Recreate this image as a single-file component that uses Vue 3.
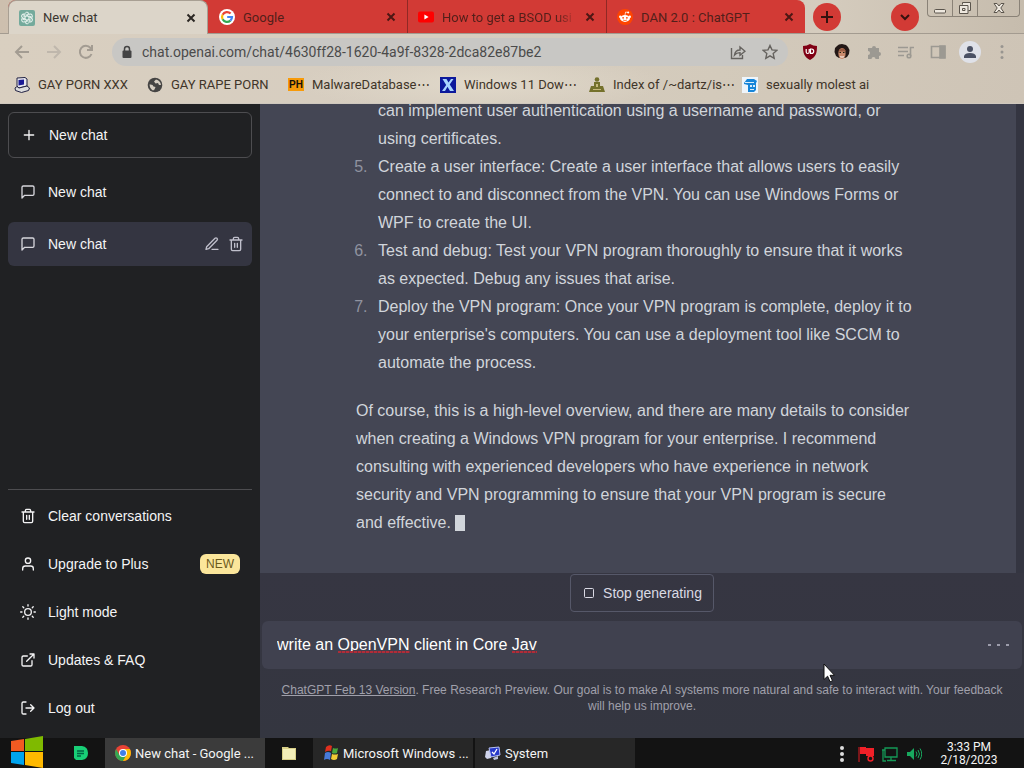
<script setup>
import { ref } from 'vue'

const tabs = [
  { title: 'New chat', icon: 'gpt', active: true },
  { title: 'Google', icon: 'google' },
  { title: 'How to get a BSOD usi', icon: 'youtube' },
  { title: 'DAN 2.0 : ChatGPT', icon: 'reddit' },
]
const bookmarks = [
  { title: 'GAY PORN XXX', icon: 'pc', size: 'w94' },
  { title: 'GAY RAPE PORN', icon: 'globe', size: 'w102' },
  { title: 'MalwareDatabase⋯', icon: 'ph', size: 'w113' },
  { title: 'Windows 11 Dow⋯', icon: 'x', size: 'w110' },
  { title: 'Index of /~dartz/is⋯', icon: 'people', size: 'w114' },
  { title: 'sexually molest ai', icon: 'blue', size: 'w98' },
]
const address = ref('chat.openai.com/chat/4630ff28-1620-4a9f-8328-2dca82e87be2')
const prompt = ref('write an OpenVPN client in Core Jav')
const menu = [
  { title: 'Clear conversations', icon: 'trash' },
  { title: 'Upgrade to Plus', icon: 'user', badge: 'NEW' },
  { title: 'Light mode', icon: 'sun' },
  { title: 'Updates & FAQ', icon: 'external' },
  { title: 'Log out', icon: 'logout' },
]
</script>

<template>
  <div class="desktop">
    <header class="chrome">
      <div class="tabstrip">
        <div class="tabs">
          <div v-for="t in tabs" :key="t.title" class="tab" :class="{ active: t.active }">
            <svg v-if="t.icon === 'gpt'" class="i16" viewBox="0 0 16 16">
              <rect width="16" height="16" rx="2" fill="#74aa9c" />
              <g fill="none" stroke="#e8f3ef" stroke-width="1">
                <path v-for="a in [0, 60, 120, 180, 240, 300]" :key="a" :transform="`rotate(${a} 8 8)`" d="M8 5.8 5.9 7V4.3C5.9 2.9 7 2.2 8 2.2c.9 0 1.7.5 2 1.2L7.2 5" />
              </g>
            </svg>
            <svg v-else-if="t.icon === 'google'" class="i16" viewBox="0 0 16 16">
              <circle cx="8" cy="8" r="8" fill="#fff" />
              <g fill="none" stroke-width="2.2">
                <path d="M11.6 4.6A5 5 0 0 0 3.6 5.7" stroke="#ea4335" />
                <path d="M3.6 5.7a5 5 0 0 0 0 4.6" stroke="#fbbc05" />
                <path d="M3.6 10.3a5 5 0 0 0 7.8 1.3" stroke="#34a853" />
                <path d="M11.4 11.6A5 5 0 0 0 13 8H8.2" stroke="#4285f4" />
              </g>
            </svg>
            <svg v-else-if="t.icon === 'youtube'" class="i16" viewBox="0 0 16 16">
              <rect y="2.5" width="16" height="11" rx="2" fill="#f00" />
              <path d="m6.4 5.6 4.2 2.4-4.2 2.4z" fill="#fff" />
            </svg>
            <svg v-else class="i16" viewBox="0 0 16 16">
              <circle cx="8" cy="8" r="8" fill="#ff4500" />
              <ellipse cx="8" cy="9.4" rx="4.9" ry="3.5" fill="#fff" />
              <circle cx="3.2" cy="7.8" r="1.2" fill="#fff" /><circle cx="12.8" cy="7.8" r="1.2" fill="#fff" />
              <circle cx="11.2" cy="3.5" r="1" fill="#fff" />
              <path d="m8 6 .6-3 2.4.5" stroke="#fff" stroke-width=".7" fill="none" />
              <circle cx="6.1" cy="8.8" r=".9" fill="#ff4500" /><circle cx="9.9" cy="8.8" r=".9" fill="#ff4500" />
              <path d="M6 11q2 1.2 4 0" stroke="#ff4500" stroke-width=".7" fill="none" />
            </svg>
            <span class="tab-title">{{ t.title }}</span>
            <button class="close" :aria-label="`Close ${t.title}`">
              <svg viewBox="0 0 10 10"><path d="m1.5 1.5 7 7m0-7-7 7" /></svg>
            </button>
          </div>
        </div>
        <button class="round" aria-label="New tab"><svg viewBox="0 0 14 14"><path d="M7 1v12M1 7h12" /></svg></button>
        <span class="grow"></span>
        <button class="round" aria-label="Search tabs"><svg viewBox="0 0 14 14"><path d="m3 5 4 4 4-4" /></svg></button>
        <div class="window-buttons">
          <button aria-label="Minimize"><svg viewBox="0 0 14 14"><rect x="1.5" y="8.5" width="11" height="3.5" rx="1" /></svg></button>
          <button aria-label="Restore"><svg viewBox="0 0 14 14"><path d="M4.500 3.500V1.500h8V9.500h-2M1.500 4.500h8.500v8h-8.500zM4.500 7.500h2.500v2h-2.500z" /></svg></button>
          <button class="wide" aria-label="Close window"><svg viewBox="0 0 14 14"><path d="M2 2.500h3l2 2.500 2-2.500h3L8.800 7l3.200 4.500H9L7 9l-2 2.500H2L5.200 7z" /></svg></button>
        </div>
      </div>

      <div class="toolbar">
        <div class="nav">
          <button aria-label="Back"><svg viewBox="0 0 16 16"><path d="M15 8H2m6-6L2 8l6 6" /></svg></button>
          <button class="dim" aria-label="Forward"><svg viewBox="0 0 16 16"><path d="M1 8h13M8 2l6 6-6 6" /></svg></button>
          <button aria-label="Reload"><svg viewBox="0 0 16 16"><path d="M13.500 10A6 6 0 1 1 12.500 4L14 5.500M14 1v5H9" /></svg></button>
        </div>
        <div class="address">
          <svg class="lock" viewBox="0 0 10 14"><path d="M2.500 6V4a2.500 2.500 0 0 1 5 0v2" fill="none" stroke="#444" stroke-width="1.500" /><rect x=".5" y="5.500" width="9" height="7.500" rx="1" fill="#444" /></svg>
          <input v-model="address" type="text" aria-label="Address" />
          <button aria-label="Share"><svg viewBox="0 0 16 16"><path d="M1.500 4v10.500h11V11M4.500 11c.5-3.500 2.500-5 5.500-5V3l5 4.200-5 4V8.600c-2.500 0-4 .6-5.500 2.400z" /></svg></button>
          <button aria-label="Bookmark"><svg viewBox="0 0 16 16"><path d="m8 1.500 2 4.400 4.800.5-3.600 3.200 1 4.700L8 11.900l-4.200 2.400 1-4.700L1.200 6.400 6 5.900z" /></svg></button>
        </div>
        <div class="extensions">
          <button aria-label="Ad blocker">
            <svg viewBox="0 0 16 16"><path d="M8 0q3 2 7 2c0 7-1 11-7 14C2 13 1 9 1 2q4 0 7-2z" fill="#800014" /><path d="M4.200 5v3q0 1.500 1.500 1.500T7.200 8V5m1.300 0v4.400h1a2.200 2.200 0 0 0 0-4.400z" fill="none" stroke="#fff" stroke-width="1.200" /></svg>
          </button>
          <button aria-label="Portrait">
            <svg viewBox="0 0 16 16"><path d="M3 2 5 .5 8 0l4 1 2 2 1.500 3-.5 4-2 3-2 1H5l-3-2-1.500-4L1 4z" fill="#231816" /><ellipse cx="8" cy="9.500" rx="3.600" ry="5.500" fill="#c98a6c" /><path d="M4.500 7 7 4.500h3L12 7l-1 .500H5z" fill="#9a5c42" /><path d="M6 12q2 1 4 0l-.5 1.500h-3z" fill="#fff" /><path d="M5.500 8.500h1.500m2 0h1.500" stroke="#221" /></svg>
          </button>
          <button aria-label="Extensions">
            <svg viewBox="0 0 16 16"><path fill="#9c9992" d="M2 4h4a2 2 0 1 1 4 0h3v4a2 2 0 1 1 0 4v3H9.500a2 2 0 0 0-4 0H2v-4a2 2 0 0 0 0-4z" /></svg>
          </button>
          <button aria-label="Media">
            <svg class="line" viewBox="0 0 16 16"><path d="M0 3.500h10M0 7.500h10M0 11.500h6M12.500 12V3.500H16" /><circle cx="11" cy="12" r="1.800" /></svg>
          </button>
          <button aria-label="Side panel">
            <svg class="line" viewBox="0 0 16 16"><path d="M1.500 2.500h13v11h-13z" /><path d="M10 2h5v12h-5z" fill="#9c9992" /></svg>
          </button>
          <button class="profile" aria-label="Profile">
            <svg viewBox="0 0 16 16"><circle cx="8" cy="5" r="3" fill="#4b5164" /><path d="M2 14v-2q1-3 6-3t6 3v2z" fill="#4b5164" /></svg>
          </button>
          <button aria-label="Menu">
            <svg viewBox="0 0 16 16" fill="#989590"><circle cx="8" cy="2.500" r="1.500" /><circle cx="8" cy="8" r="1.500" /><circle cx="8" cy="13.500" r="1.500" /></svg>
          </button>
        </div>
      </div>

      <nav class="bookmarks">
        <a v-for="b in bookmarks" :key="b.title" href="#">
          <svg v-if="b.icon === 'pc'" class="i16" viewBox="0 0 16 16"><path d="m3 1 8-.5 2 1.500v7l-8 2-2-2z" fill="#e8e8ee" stroke="#222244" /><path d="m4.500 3 5.500-.500v5l-5.500 1z" fill="#1b1b96" /><path d="m1 11 2-1.500 2 1.500 8-2 2.500 2-1 2.500-7 2-6-2z" fill="#ddd" stroke="#222244" /></svg>
          <svg v-else-if="b.icon === 'globe'" class="i16" viewBox="0 0 16 16"><circle cx="8" cy="8" r="7.300" fill="#454443" /><path d="M2.500 7.500Q6 7 6.500 9.500L8.500 10 7.500 12.500 6 13.500Q3 12 2.500 7.500zM9 2.500 7 4.500l1.500 2L11 6l1 2h2Q13.500 3.500 9 2.500z" fill="#d5cdc1" /></svg>
          <span v-else-if="b.icon === 'ph'" class="ph">PH</span>
          <svg v-else-if="b.icon === 'x'" class="i16" viewBox="0 0 16 16"><path d="M0 0h16v16H0z" fill="#0c199c" /><path d="M2.500 2h4L8.500 5.500 11 2h2.500L9.700 7.500 14 14h-4L7.500 9.800 5 14H2l4.200-6z" fill="#a8d4ff" /></svg>
          <svg v-else-if="b.icon === 'people'" class="i16" viewBox="0 0 16 16" fill="#74712c"><circle cx="8" cy="2.500" r="2.300" /><path d="M5 5h6v4h3l2 6H0l2-6h3z" /><path d="M7 7h2v3H7zM4 12h8v1H4z" fill="#c6b97d" /></svg>
          <svg v-else class="i16" viewBox="0 0 16 16"><path d="M0 0h16v16H0z" fill="#eef5fb" /><path d="M2 6 5 2h7l3 2-1 2v7l-2 2H6V8L2 7z" fill="#1886d9" /><path d="M3 5h9v1H3zM8 8h2v2H8zm3 0h2v2h-2zM8 12h4v1H8z" fill="#d9eefb" /></svg>
          <span :class="['bm-title', b.size]">{{ b.title }}</span>
        </a>
      </nav>
    </header>

    <div class="app">
      <aside class="sidebar">
        <button class="new-chat">
          <svg class="feather" viewBox="0 0 24 24"><path d="M12 5v14M5 12h14" /></svg>New chat
        </button>
        <div class="history">
          <a href="#" class="row"><svg class="feather" viewBox="0 0 24 24"><path d="M21 15a2 2 0 0 1-2 2H7l-4 4V5a2 2 0 0 1 2-2h14a2 2 0 0 1 2 2z" /></svg><span>New chat</span></a>
          <div class="row selected">
            <svg class="feather" viewBox="0 0 24 24"><path d="M21 15a2 2 0 0 1-2 2H7l-4 4V5a2 2 0 0 1 2-2h14a2 2 0 0 1 2 2z" /></svg><span>New chat</span>
            <div class="actions">
              <button aria-label="Rename"><svg class="feather" viewBox="0 0 24 24"><path d="M12 20h9M16.500 3.500a2.100 2.100 0 0 1 3 3L7 19l-4 1 1-4z" /></svg></button>
              <button aria-label="Delete"><svg class="feather" viewBox="0 0 24 24"><path d="M3 6h18M19 6v14a2 2 0 0 1-2 2H7a2 2 0 0 1-2-2V6m3 0V4a2 2 0 0 1 2-2h4a2 2 0 0 1 2 2v2M10 11v6M14 11v6" /></svg></button>
            </div>
          </div>
        </div>
        <nav class="menu">
          <a v-for="m in menu" :key="m.title" href="#" class="row">
            <svg class="feather" viewBox="0 0 24 24">
              <path v-if="m.icon === 'trash'" d="M3 6h18M19 6v14a2 2 0 0 1-2 2H7a2 2 0 0 1-2-2V6m3 0V4a2 2 0 0 1 2-2h4a2 2 0 0 1 2 2v2M10 11v6M14 11v6" />
              <path v-else-if="m.icon === 'user'" d="M20 21v-2a4 4 0 0 0-4-4H8a4 4 0 0 0-4 4v2M16 7a4 4 0 1 1-8 0 4 4 0 0 1 8 0z" />
              <path v-else-if="m.icon === 'sun'" d="M17 12a5 5 0 1 1-10 0 5 5 0 0 1 10 0zM12 1v2M12 21v2M4.200 4.200l1.400 1.400M18.400 18.400l1.400 1.400M1 12h2M21 12h2M4.200 19.800l1.400-1.400M18.400 5.600l1.400-1.400" />
              <path v-else-if="m.icon === 'external'" d="M18 13v6a2 2 0 0 1-2 2H5a2 2 0 0 1-2-2V8a2 2 0 0 1 2-2h6M15 3h6v6M10 14 21 3" />
              <path v-else d="M9 21H5a2 2 0 0 1-2-2V5a2 2 0 0 1 2-2h4M16 17l5-5-5-5M21 12H9" />
            </svg>
            <span>{{ m.title }}</span>
            <span v-if="m.badge" class="badge">{{ m.badge }}</span>
          </a>
        </nav>
      </aside>

      <main class="main">
        <section class="conversation">
          <article class="answer">
            <ol start="4">
              <li class="continued">can implement user authentication using a username and password, or using certificates.</li>
              <li>Create a user interface: Create a user interface that allows users to easily connect to and disconnect from the VPN. You can use Windows Forms or WPF to create the UI.</li>
              <li>Test and debug: Test your VPN program thoroughly to ensure that it works as expected. Debug any issues that arise.</li>
              <li>Deploy the VPN program: Once your VPN program is complete, deploy it to your enterprise's computers. You can use a deployment tool like SCCM to automate the process.</li>
            </ol>
            <p>Of course, this is a high-level overview, and there are many details to consider when creating a Windows VPN program for your enterprise. I recommend consulting with experienced developers who have experience in network security and VPN programming to ensure that your VPN program is secure and effective. <span class="caret"></span></p>
          </article>
        </section>
        <footer class="composer">
          <button class="stop"><svg class="feather" viewBox="0 0 24 24"><rect x="3" y="3" width="18" height="18" rx="2" /></svg>Stop generating</button>
          <div class="prompt">
            <textarea v-model="prompt" rows="1" aria-label="Message" spellcheck="false"></textarea>
            <i class="misspelt first"></i><i class="misspelt second"></i>
            <span class="pending"><i></i><i></i><i></i></span>
          </div>
          <p class="note"><a href="#">ChatGPT Feb 13 Version</a>. Free Research Preview. Our goal is to make AI systems more natural and safe to interact with. Your feedback will help us improve.</p>
        </footer>
      </main>
    </div>

    <footer class="taskbar">
      <button class="start" aria-label="Start">
        <svg viewBox="0 0 34 32"><path d="M1 5 14 3v12H1z" fill="#f25a22" /><path d="m15 3 18-3v15H15z" fill="#7fba00" /><path d="M1 16h13v13L1 27z" fill="#00a4ef" /><path d="M15 16h18v16l-18-3z" fill="#ffb900" /></svg>
      </button>
      <button class="pinned notes" aria-label="Notes">
        <svg class="i16" viewBox="0 0 16 16"><path d="M1 1h8q6 1 6 7t-6 7H3l-2-2z" fill="#18cf77" /><path d="M4 6h7M4 8.500h7M4 11h4" stroke="#064" stroke-width="1.300" /></svg>
      </button>
      <button class="task current">
        <svg class="i16" viewBox="0 0 16 16"><circle cx="8" cy="8" r="8" fill="#e94235" /><path d="M1.100 4A8 8 0 0 0 8 16l3.500-6L8 8 4.500 10z" fill="#34a853" /><path d="M8 16A8 8 0 0 0 14.900 4H8l3.500 6z" fill="#fbbc05" /><circle cx="8" cy="8" r="4" fill="#fff" /><circle cx="8" cy="8" r="3" fill="#3f7fe8" /></svg>
        New chat - Google ...
      </button>
      <button class="pinned folder" aria-label="Files">
        <svg class="i16" viewBox="0 0 16 16"><path d="M1 2h6l1 1h7v12H1z" fill="#d8cf87" /><path d="M2 4h12v10H2z" fill="#f3eeb8" /></svg>
      </button>
      <button class="task">
        <svg class="i16" viewBox="0 0 16 16"><path d="M3 2q3-3 6-1L8 6Q5 5 2 7z" fill="#e0301e" /><path d="M10 3q3 1 5 0l-1 5q-3 1-5 0z" fill="#4ba83c" /><path d="M2 8q3-2 6 0l-1 7q-3-2-6 0z" fill="#477ad9" /><path d="M9 9q3 1 6 0l-1 5q-3 2-6 0z" fill="#f1cb35" /></svg>
        Microsoft Windows ...
      </button>
      <button class="task">
        <svg class="i16" viewBox="0 0 16 16"><path d="m1 6 5-1v8l-4 1-2-2z" fill="#cfd3ea" /><path d="m4 3 10-1 1 8-9 2z" fill="#2638c9" stroke="#b8c2f2" /><path d="m7 7 2 2 3-5" stroke="#fff" stroke-width="1.300" fill="none" /><path d="m8 13 5-2v3l-4 1z" fill="#bcc4df" /></svg>
        System
      </button>
      <span class="grow"></span>
      <div class="tray">
        <button aria-label="Hidden icons"><svg viewBox="0 0 16 16" fill="#ddd"><circle cx="8" cy="2" r="2" /><circle cx="8" cy="8" r="2" /><circle cx="8" cy="14" r="2" /></svg></button>
        <button aria-label="Alerts"><svg viewBox="0 0 16 16"><path d="M1 1v15" stroke="#e31b23" /><path d="M2 1h6v1h8v8H8V8H2z" fill="#f02028" /><circle cx="12.500" cy="12.500" r="2.500" fill="#141414" stroke="#f02028" stroke-width="1.500" /></svg></button>
        <button aria-label="Network"><svg viewBox="0 0 16 16" fill="none" stroke="#159957" stroke-width="1.300"><path d="M3 2h12v9H3zM9 11v3M5 14.500h9M0 4h3M1 4v11h3" /></svg></button>
        <button aria-label="Volume"><svg viewBox="0 0 16 16"><path d="M1 6h3l4-4v12l-4-4H1z" fill="#18a85e" /><path d="M10 5.500q2 2.500 0 5M12 4q3 4 0 8M14 2.500q3.500 5.500 0 11" stroke="#18a85e" fill="none" /></svg></button>
      </div>
      <time class="clock"><span>3:33 PM</span><span>2/18/2023</span></time>
    </footer>

    <svg class="pointer" viewBox="0 0 12 20"><path d="M1 1v15.500l3.600-3.300 2.500 5.600 2.400-1.100-2.500-5.400h4.500z" fill="#fff" stroke="#111" /></svg>
  </div>
</template>

<style>
html, body { margin: 0; background: #343541; }
</style>

<style scoped>
* { box-sizing: border-box; }
button, input, textarea { margin: 0; padding: 0; border: 0; background: none; color: inherit; font: inherit; outline: 0; }
a { color: inherit; text-decoration: none; }
svg { display: block; flex: none; }
.grow { flex: 1; }
.i16 { width: 16px; height: 16px; }
.desktop { position: relative; display: flex; flex-direction: column; height: 100vh; overflow: hidden; font: 14px "Liberation Sans", Arial, sans-serif; }

.chrome { flex: none; background: radial-gradient(ellipse at 47% 80%, #e0d8c9, transparent 24%), linear-gradient(100deg, #d9cfc0, #d6cdc0 45%, #d3cabb 70%, #cec4b6); font: 13px Roboto, sans-serif; color: #3a3029; }
.tabstrip { display: flex; height: 34px; border-bottom: 1px solid #a39b90; padding-left: 8px; background: linear-gradient(90deg, #cdbfae, #d5ccbe 80%, #c6bcad); }
.tabs { display: flex; flex: 0 1 797px; min-width: 0; background: #d23a35; border-radius: 8px 8px 0 0; }
.tab { display: flex; align-items: center; flex: 1; min-width: 0; padding: 1px 11px 0 10px; gap: 8px; border-left: 1px solid #8f2925; }
.tab.active { height: 34px; padding-top: 0; background: #dcd5c9; border: 1px solid #a89f93; border-bottom: 0; border-radius: 8px 8px 0 0; }
.tab.active + .tab { border-left-color: transparent; }
.tab-title { flex: 1; min-width: 0; overflow: hidden; white-space: nowrap; color: #521f1a; }
.tab.active .tab-title { color: #3a352f; }
.tab:nth-child(3) .tab-title { mask-image: linear-gradient(90deg, #000 84%, transparent); }
.close svg { width: 10px; height: 10px; fill: none; stroke: #4c1714; stroke-width: 2; }
.active .close svg { stroke: #2b2723; }
.round { display: grid; place-items: center; flex: none; width: 28px; height: 28px; margin: 3px 0 0 8px; border-radius: 50%; background: #d23a35; }
.round svg { width: 14px; height: 14px; fill: none; stroke: #35120f; stroke-width: 2; }
.window-buttons { display: flex; height: 17px; margin: 0 4px 0 8px; border: 1px solid #8a8277; border-top: 0; border-radius: 0 0 4px 4px; }
.window-buttons button { display: grid; place-items: center; width: 25px; border-right: 1px solid #8a8277; }
.window-buttons button.wide { width: 41px; border: 0; }
.window-buttons svg { width: 14px; height: 14px; fill: #eee8df; stroke: #5b554d; }

.toolbar { display: flex; align-items: center; height: 36px; padding: 0 12px; }
.nav { display: flex; gap: 16px; width: 100px; padding-left: 2px; }
.nav svg { width: 16px; height: 16px; fill: none; stroke: #a39c92; stroke-width: 2; }
.nav .dim svg { stroke: #bfb7ac; }
.address { display: flex; align-items: center; flex: 1; min-width: 0; height: 28px; padding: 0 10px; gap: 16px; border-radius: 14px; background: #c8c7c4; }
.address .lock { width: 10px; height: 14px; margin-right: -6px; }
.address input { flex: 1; min-width: 0; font-size: 14px; color: #4b4b4b; }
.address button svg { width: 16px; height: 16px; fill: none; stroke: #65625e; stroke-width: 1.4; }
.extensions { display: flex; align-items: center; gap: 16px; margin-left: 14px; }
.extensions button svg { width: 16px; height: 16px; }
.extensions .line { fill: none; stroke: #9c9992; stroke-width: 1.6; }
.extensions .profile { display: grid; place-items: center; width: 22px; height: 22px; margin: 0 -3px; border-radius: 50%; background: #dfe1e8; }
.extensions button:last-child { margin-right: 2px; }

.bookmarks { display: flex; align-items: center; height: 34px; padding: 0 14px 4px; gap: 15px; border-bottom: 1px solid #cfc8be; }
.bookmarks a { display: flex; align-items: center; gap: 8px; white-space: nowrap; color: #403529; }
.w94 { width: 94px; }
.w102 { width: 102px; }
.w113 { width: 113px; }
.w110 { width: 110px; }
.w114 { width: 114px; }
.w98 { width: 98px; }
.ph { width: 16px; height: 13px; background: #f79a09; color: #16100a; font: bold 10px/13px "Liberation Sans", sans-serif; text-align: center; }

.app { display: flex; flex: 1; min-height: 0; background: #343541; }
.sidebar { display: flex; flex-direction: column; flex: 0 0 260px; padding: 8px; background: #202123; color: #f4f4f5; }
.feather { width: 16px; height: 16px; fill: none; stroke: currentColor; stroke-width: 2; stroke-linecap: round; stroke-linejoin: round; }
.new-chat { display: flex; align-items: center; gap: 12px; flex: none; height: 46px; padding: 0 12px; border: 1px solid #4d4d50; border-radius: 6px; }
.history { display: flex; flex-direction: column; gap: 8px; flex: 1; margin-top: 12px; }
.row { display: flex; align-items: center; gap: 12px; height: 44px; padding: 0 12px; border-radius: 6px; }
.history .feather { color: #d6d6dc; }
.selected { padding-right: 8px; background: #343541; }
.actions { display: flex; gap: 8px; margin-left: auto; }
.history .actions .feather { color: #c0c0cc; }
.menu { display: flex; flex-direction: column; gap: 4px; padding-top: 4px; border-top: 1px solid #4d4d50; }
.badge { margin-left: auto; padding: 0 6px; border-radius: 6px; background: #fbe69b; color: #6d5a1d; font-size: 12px; line-height: 20px; }

.main { display: flex; flex-direction: column; flex: 1; min-width: 0; }
.conversation { display: flex; flex-direction: column; justify-content: flex-end; flex: 1; min-height: 0; margin-right: 8px; overflow: hidden; background: #444654; }
.answer { width: 100%; max-width: 672px; margin: 0 auto; padding: 0 58px 36px 54px; color: #d1d5db; font-size: 16px; line-height: 28px; }
.answer ol { margin: 0 0 20px; padding-left: 16px; }
.answer li { padding-left: 6px; }
.answer li::marker { color: #9093a0; }
.answer .continued { list-style: none; }
.answer p { margin: 0; }
.caret { display: inline-block; width: 10px; height: 16px; vertical-align: -3px; background: #d1d5db; }
.composer { display: flex; flex-direction: column; flex: none; padding: 1px 2px 24px; background: linear-gradient(#363642, #343640); }
.stop { display: flex; align-items: center; align-self: center; gap: 8px; height: 38px; padding: 0 11px; border: 1px solid #565869; border-radius: 4px; color: #dadae4; }
.stop .feather { width: 12px; height: 12px; margin: 0 0 0 1px; }
.prompt { position: relative; display: flex; align-items: center; height: 48px; margin: 9px 0 13px; padding: 0 13px 0 15px; border-radius: 6px; background: #40414f; }
.prompt textarea { flex: 1; height: 24px; resize: none; overflow: hidden; color: #fff; font-size: 16px; line-height: 24px; }
.misspelt { position: absolute; z-index: 1; top: 30px; height: 2px; background: repeating-linear-gradient(90deg, #b02c38 0 3px, #73313f 3px 4px); }
.first { left: 76px; width: 72px; }
.second { left: 250px; width: 25px; }
.pending { display: flex; gap: 6px; }
.pending i { width: 3px; height: 2px; background: #9c9cab; }
.note { margin: 0; padding: 0 16px; color: #a0a0ab; font-size: 12px; line-height: 16px; text-align: center; }
.note a { text-decoration: underline; }

.taskbar { display: flex; flex: none; height: 30px; background: #131313; color: #f4f4f4; font: 13px Roboto, sans-serif; }
.start { width: 56px; padding-left: 10px; }
.start svg { width: 34px; height: 32px; margin-top: -2px; }
.pinned { display: grid; place-items: center; width: 48px; }
.notes { width: 49px; }
.task { display: flex; align-items: center; gap: 4px; flex: 0 1 162px; padding: 0 10px; overflow: hidden; white-space: nowrap; border-right: 2px solid #131313; background: #272727; }
.current { flex-basis: 160px; border: 0; background: #3b3b3b; }
.tray { display: flex; align-items: center; gap: 8px; margin-top: 2px; }
.tray svg { width: 16px; height: 16px; }
.clock { display: flex; flex-direction: column; justify-content: center; width: 64px; margin: 2px 23px 0 15px; font-size: 12px; line-height: 13px; text-align: center; }
.pointer { position: absolute; left: 80.4%; top: 663px; width: 12px; height: 20px; }
</style>
